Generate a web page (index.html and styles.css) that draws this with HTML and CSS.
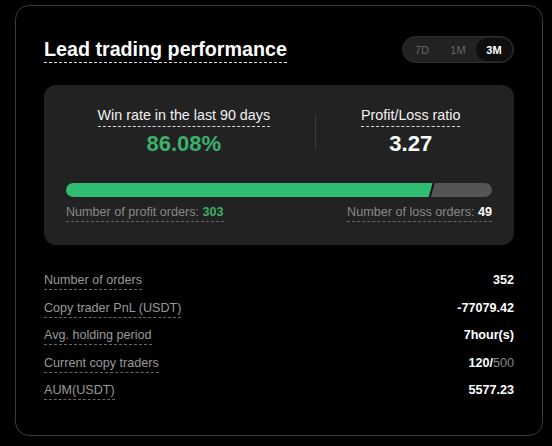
FILE: index.html
```html
<!DOCTYPE html>
<html lang="en">
<head>
  <meta charset="UTF-8">
  <meta name="viewport" content="width=device-width, initial-scale=1.0">
  <title>Lead trading performance</title>
  <link rel="stylesheet" href="styles.css">
</head>
<body>
  <div class="card">
    <div class="header">
      <h2 class="title dashed">Lead trading performance</h2>
      <div class="tabs">
        <button class="tab">7D</button>
        <button class="tab">1M</button>
        <button class="tab active">3M</button>
      </div>
    </div>

    <div class="panel">
      <div class="stats">
        <div class="stat">
          <span class="stat-label dashed">Win rate in the last 90 days</span>
          <div class="stat-value green">86.08%</div>
        </div>
        <div class="divider"></div>
        <div class="stat">
          <span class="stat-label dashed">Profit/Loss ratio</span>
          <div class="stat-value">3.27</div>
        </div>
      </div>

      <div class="bar">
        <div class="bar-win" style="width: 86.08%"></div>
        <div class="bar-loss"></div>
      </div>

      <div class="orders">
        <span class="order-label">Number of profit orders: <b class="green">303</b></span>
        <span class="order-label">Number of loss orders: <b>49</b></span>
      </div>
    </div>

    <div class="list">
      <div class="row"><span class="row-label">Number of orders</span><span class="row-value">352</span></div>
      <div class="row"><span class="row-label">Copy trader PnL (USDT)</span><span class="row-value">-77079.42</span></div>
      <div class="row"><span class="row-label">Avg. holding period</span><span class="row-value">7hour(s)</span></div>
      <div class="row"><span class="row-label">Current copy traders</span><span class="row-value">120/<span class="muted">500</span></span></div>
      <div class="row"><span class="row-label">AUM(USDT)</span><span class="row-value">5577.23</span></div>
    </div>
  </div>
</body>
</html>
```

FILE: styles.css
```css
body { margin: 0; padding: 5px 8px 0 15px; background: #000; color: #fff; font-family: "Liberation Sans", Arial, sans-serif; }
.card { width: 528px; box-sizing: border-box; border: 1px solid #3a3a3a; border-radius: 14px; padding: 30px 28px 35px 28px; }

.header { display: flex; justify-content: space-between; align-items: center; }
.title { margin: 0; font-size: 19.7px; line-height: 24px; font-weight: bold; padding-bottom: 1px; }
.dashed { border-bottom: 1px dashed #ddd; }

.tabs { display: flex; padding: 1px; background: #222; border: 1px solid #2e2e2e; border-radius: 14px; }
.tab { width: 36px; height: 23px; padding: 0; border: none; border-radius: 12px; background: transparent; color: #666; font-family: inherit; font-size: 11px; cursor: pointer; }
.tab.active { background: #0e0e0e; color: #fff; font-weight: bold; }

.panel { margin-top: 22px; background: #222; border-radius: 12px; padding: 22px 22px 23px 22px; }
.stats { display: flex; justify-content: center; align-items: center; }
.stat { display: flex; flex-direction: column; align-items: center; }
.stat-label { font-size: 14.3px; line-height: 16px; color: #f2f2f2; padding-bottom: 3px; }
.stat-value { margin-top: 4px; font-size: 22px; line-height: 26px; font-weight: bold; }
.divider { width: 1px; height: 36px; margin: 0 45px; background: #3c3c3c; }
.green { color: #3cb16b; }

.bar { display: flex; height: 14px; margin-top: 26px; border-radius: 7px; overflow: hidden; background: #111; }
.bar-win { background: #2ebd73; clip-path: polygon(0 0, 100% 0, calc(100% - 4px) 100%, 0 100%); }
.bar-loss { flex: 1; margin-left: -2px; background: #555; clip-path: polygon(4px 0, 100% 0, 100% 100%, 0 100%); }

.orders { display: flex; justify-content: space-between; margin-top: 8px; }
.order-label { font-size: 12.6px; line-height: 15px; color: #888; padding-bottom: 1px; border-bottom: 1px dashed #666; }
.order-label b { color: #fff; }
.order-label b.green { color: #3cb16b; }

.list { margin-top: 28px; display: flex; flex-direction: column; gap: 10.5px; }
.row { display: flex; justify-content: space-between; align-items: flex-start; }
.row-label { font-size: 12.6px; line-height: 15px; color: #999; padding-bottom: 1px; border-bottom: 1px dashed #666; }
.row-value { font-size: 12.6px; line-height: 15px; font-weight: bold; color: #fff; }
.muted { color: #888; font-weight: normal; }
```
